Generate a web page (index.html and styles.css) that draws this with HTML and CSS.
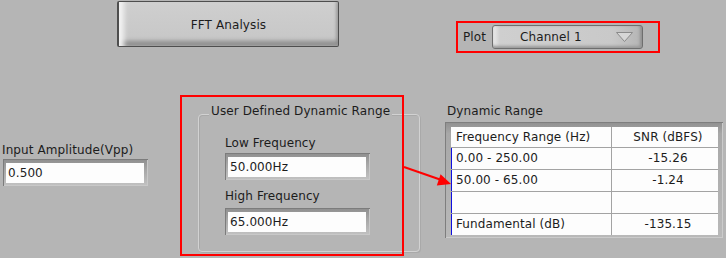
FILE: index.html
```html
<!DOCTYPE html>
<html>
<head>
<meta charset="utf-8">
<link rel="stylesheet" href="styles.css">
</head>
<body>
<div class="panel">
  <div class="top">
    <div class="btn">FFT Analysis</div>
    <div class="plot">
      <span class="plot-label">Plot</span>
      <div class="ring">
        <span class="ring-text">Channel 1</span>
        <svg class="tri" width="17" height="10" viewBox="0 0 17 10"><polygon points="0.5,0.5 16.5,0.5 8.5,9.5" fill="#d6d6d6" stroke="#8a8a8a" stroke-width="1"/></svg>
      </div>
    </div>
  </div>
  <div class="bottom">
    <div class="amp">
      <div class="lbl">Input Amplitude(Vpp)</div>
      <div class="field"><div class="val">0.500</div></div>
    </div>
    <div class="group">
      <span class="legend">User Defined Dynamic Range</span>
      <div class="lbl lbl-low">Low Frequency</div>
      <div class="field"><div class="val">50.000Hz</div></div>
      <div class="lbl lbl-high">High Frequency</div>
      <div class="field"><div class="val">65.000Hz</div></div>
    </div>
    <div class="dr">
      <div class="lbl">Dynamic Range</div>
      <div class="frame">
        <div class="grid">
          <div class="c c1 h">Frequency Range (Hz)</div><div class="c c2 h">SNR (dBFS)</div>
          <div class="c c1 d">0.00 - 250.00</div><div class="c c2 d">-15.26</div>
          <div class="c c1 d">50.00 - 65.00</div><div class="c c2 d">-1.24</div>
          <div class="c c1 d"></div><div class="c c2 d"></div>
          <div class="c c1 d">Fundamental (dB)</div><div class="c c2 d">-135.15</div>
        </div>
      </div>
    </div>
  </div>
  <div class="mark"></div>
  <svg class="arrow" width="726" height="258" viewBox="0 0 726 258">
    <line x1="404" y1="167" x2="440" y2="179.5" stroke="#ff0000" stroke-width="2"/>
    <polygon points="451,184 436.8,185.6 440.6,174.2" fill="#ff0000"/>
  </svg>
</div>
</body>
</html>
```

FILE: styles.css
```css
html, body {
  margin: 0;
  padding: 0;
  background: #b5b5b5;
}
.panel {
  position: relative;
  width: 726px;
  height: 258px;
  overflow: hidden;
  font-family: "DejaVu Sans", Verdana, sans-serif;
  font-size: 12px;
  letter-spacing: 0.1px;
  color: #1c1c1c;
  background: #b5b5b5;
}
.top {
  display: flex;
  align-items: flex-start;
  height: 55px;
}
.btn {
  box-sizing: border-box;
  margin-left: 117px;
  margin-top: 1px;
  width: 222px;
  height: 46px;
  border: 1px solid #4e4e4e;
  border-left-width: 2px;
  border-radius: 2px;
  background: linear-gradient(#cfcfcf, #c6c6c6);
  box-shadow: inset 7px 0 5px -2px #f2f2f2, inset 0 -7px 4px -2px #8c8c8c, inset -3px 0 3px -1px #a0a0a0;
  text-align: center;
  line-height: 46px;
}
.plot {
  box-sizing: border-box;
  margin-left: 117px;
  margin-top: 21px;
  width: 204px;
  height: 32px;
  border: 2px solid #ff0000;
  display: flex;
  align-items: center;
}
.plot-label {
  box-sizing: border-box;
  width: 34px;
  padding-left: 5px;
}
.ring {
  box-sizing: border-box;
  width: 151px;
  height: 24px;
  border: 1px solid #6e6e6e;
  border-radius: 3px;
  background: linear-gradient(to right, #ececec 0, #cfcfcf 7px, #c9c9c9 80%, #b4b4b4 100%);
  box-shadow: inset 0 -3px 3px -1px #9a9a9a, inset -3px 0 3px -1px #8f8f8f;
  display: flex;
  align-items: center;
  padding-left: 27px;
  padding-right: 9px;
}
.ring-text {
  flex: 1;
}
.tri {
  display: block;
}
.bottom {
  display: flex;
  align-items: flex-start;
}
.lbl {
  line-height: 17px;
  height: 17px;
  white-space: nowrap;
}
.amp {
  margin-left: 2px;
  margin-top: 87px;
  width: 146px;
}
.amp .field {
  margin-left: 1px;
}
.field {
  box-sizing: border-box;
  width: 145px;
  height: 27px;
  padding: 4px 4px 3px 3px;
  background: linear-gradient(#8e8e8e, #a6a6a6 40%, #c2c2c2);
  box-shadow: inset 1px 1px 0 #7c7c7c, inset -1px -1px 0 #c8c8c8;
}
.val {
  height: 20px;
  line-height: 20px;
  padding-left: 2px;
  background: #fdfdfd;
}
.group {
  position: relative;
  box-sizing: border-box;
  margin-left: 50px;
  margin-top: 59px;
  width: 222px;
  height: 138px;
  border: 1px solid #d2d2d2;
  border-radius: 4px;
  box-shadow: 1px 1px 0 #a9a9a9, inset 1px 1px 0 #a9a9a9;
  padding: 20px 0 0 26px;
}
.legend {
  position: absolute;
  top: -12px;
  left: 10px;
  padding: 0 2px;
  line-height: 17px;
  background: #b5b5b5;
  white-space: nowrap;
}
.lbl-low {
  margin-bottom: 1px;
}
.lbl-high {
  margin-top: 8px;
  margin-bottom: 3px;
}
.dr {
  margin-left: 25px;
  margin-top: 48px;
}
.dr .lbl {
  margin-left: 2px;
  margin-bottom: 2px;
}
.frame {
  box-sizing: border-box;
  width: 278px;
  height: 116px;
  padding: 5px 5px 3px 6px;
  background: linear-gradient(#8f8f8f, #a8a8a8 10%, #b9b9b9);
  box-shadow: inset 1px 1px 0 #7e7e7e, inset -1px -1px 0 #cbcbcb;
}
.grid {
  display: grid;
  grid-template-columns: 160px 106px;
  grid-template-rows: 20px 21px 21px 21px 21px;
  gap: 1px;
  background: #a3a3a3;
  width: 267px;
}
.c {
  background: #fdfdfd;
  line-height: 20px;
  white-space: nowrap;
  overflow: hidden;
}
.c1 {
  padding-left: 5px;
}
.c2 {
  text-align: center;
  padding-left: 6px;
}
.c1.d {
  box-shadow: inset 1px 0 0 #1010e0;
}
.d {
  line-height: 21px;
}
.mark {
  position: absolute;
  left: 180px;
  top: 95px;
  width: 224px;
  height: 161px;
  box-sizing: border-box;
  border: 2px solid #ff0000;
}
.arrow {
  position: absolute;
  left: 0;
  top: 0;
  pointer-events: none;
}
```
